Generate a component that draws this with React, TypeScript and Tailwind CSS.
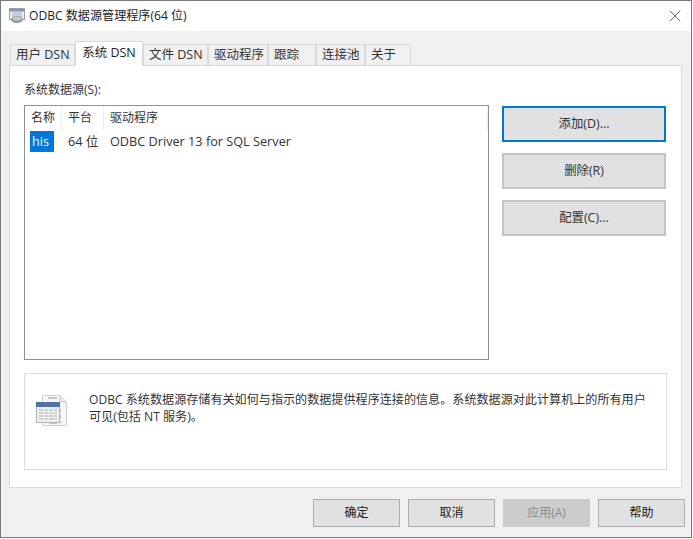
import React from 'react';
import { X } from 'lucide-react';

const tabs = [
  { label: '用户 DSN', width: 'w-[65px]' },
  { label: '系统 DSN', width: 'w-[68px]', active: true },
  { label: '文件 DSN', width: 'w-[65px]' },
  { label: '驱动程序', width: 'w-[60px]' },
  { label: '跟踪', width: 'w-[48px]' },
  { label: '连接池', width: 'w-[49px]' },
  { label: '关于', width: 'w-[46px]' },
];

const TitleIcon = () => (
  <svg width="16" height="16" viewBox="0 0 16 16" className="shrink-0">
    <rect x="0.5" y="0.5" width="15" height="11" fill="#e8ecf2" stroke="#9a9fa8" />
    <rect x="1" y="1" width="14" height="2.5" fill="#7f95b8" />
    <path d="M3 5h10M3 7h10M3 9h10" stroke="#a8adb5" />
    <ellipse cx="8" cy="11.5" rx="6" ry="3.5" fill="#8f959b" />
    <ellipse cx="8" cy="10.5" rx="4.5" ry="2" fill="#c4c8cc" />
  </svg>
);

const TableIcon = () => (
  <svg width="32" height="34" viewBox="0 0 32 34" className="shrink-0">
    <path d="M6.5 1.5H24L30.5 8V31.5H6.5Z" fill="#f6f6f6" stroke="#d0d0d0" />
    <path d="M24 1.5V8H30.5" fill="#e6e6e6" stroke="#c8c8c8" />
    <path d="M12 4h9M24 15v3M24 21v3M24 27v2M13 29h8" stroke="#b5b5b5" strokeWidth="1.5" />
    <rect x="0.5" y="8.5" width="23" height="20" fill="#f0f0f0" stroke="#b4b4b4" />
    <rect x="0" y="8" width="24" height="5" fill="#4e71a8" />
    <path d="M3 16h18M3 19h18M3 22h18M3 25h18" stroke="#b0b0b0" />
    <path d="M8 14v13M13 14v13M18 14v13" stroke="#f0f0f0" strokeWidth="1.2" />
  </svg>
);

const PanelButton = ({ label, focused }: { label: string; focused?: boolean }) => (
  <button
    className={`w-[164px] h-[36px] flex items-center justify-center bg-[#e1e1e1] text-[12.4px] text-[#333] border-2 ${
      focused ? 'border-[#0078d7]' : 'border-[#c4c4c4]'
    }`}
  >
    {label}
  </button>
);

const FooterButton = ({ label, disabled }: { label: string; disabled?: boolean }) => (
  <button
    className={`w-[87px] h-[28px] flex items-center justify-center border ${
      disabled ? 'bg-[#cccccc] border-[#cccccc] text-[#8a8a8a]' : 'bg-[#e1e1e1] border-[#adadad] text-[#222]'
    }`}
  >
    {label}
  </button>
);

export default function App() {
  return (
    <div
      className="w-[692px] h-[538px] flex flex-col border border-[#7a7a7a] bg-[#f0f0f0] text-[12px] leading-[16px] text-[#333]"
      style={{ fontFamily: '"Open Sans", "Noto Sans CJK SC", sans-serif' }}
    >
      {/* Title bar */}
      <div className="h-[30px] shrink-0 bg-white flex items-center pl-[8px] pr-[6px]">
        <TitleIcon />
        <span className="ml-[4px] text-[12.1px] text-[#222]">ODBC 数据源管理程序(64 位)</span>
        <div className="flex-1" />
        <X className="w-[20px] h-[20px] text-[#333]" strokeWidth={0.9} />
      </div>

      <div className="flex-1 flex flex-col pt-[10px] pl-[8px] pr-[8px]">
        {/* Tabs */}
        <div className="flex h-[24px] pl-[1px] relative z-10 text-[12.5px]">
          {tabs.map((t) =>
            t.active ? (
              <div
                key={t.label}
                className={`${t.width} h-[25px] bg-white border border-b-0 border-[#d9d9d9] flex items-center justify-center pb-[2px] text-[#222] whitespace-nowrap`}
              >
                {t.label}
              </div>
            ) : (
              <div
                key={t.label}
                className={`${t.width} h-[21px] mt-[3px] bg-[#f0f0f0] border border-b-0 border-[#d9d9d9] flex items-center pl-[5px] whitespace-nowrap`}
              >
                {t.label}
              </div>
            )
          )}
        </div>

        {/* Panel */}
        <div className="w-[673px] h-[423px] bg-white border border-[#d9d9d9] pl-[14px] pr-[15px] flex flex-col">
          <div className="mt-[16px] h-[16px] text-[#333]">系统数据源(S):</div>
          <div className="mt-[8px] flex gap-[13px]">
            {/* List */}
            <div className="w-[465px] h-[255px] border border-[#8f8f9d] -mt-px">
              <div className="flex h-[24px]">
                <div className="w-[37px] pl-[6px] flex items-center border-r border-[#ececec]">名称</div>
                <div className="w-[42px] pl-[6px] flex items-center border-r border-[#ececec]">平台</div>
                <div className="flex-1 pl-[6px] flex items-center border-r border-[#ececec]">驱动程序</div>
              </div>
              <div className="flex items-center h-[20px] mt-[1px]">
                <div className="w-[37px] pl-[5px]">
                  <span className="inline-block w-[24px] h-[21px] leading-[21px] pl-[2px] bg-[#0078d7] text-white text-[12.6px]">his</span>
                </div>
                <div className="w-[42px] pl-[6px] text-[12.7px] whitespace-nowrap">64 位</div>
                <div className="pl-[6px] text-[12.7px] whitespace-nowrap">ODBC Driver 13 for SQL Server</div>
              </div>
            </div>
            {/* Side buttons */}
            <div className="flex flex-col gap-[11px]">
              <PanelButton label="添加(D)..." focused />
              <PanelButton label="删除(R)" />
              <PanelButton label="配置(C)..." />
            </div>
          </div>

          {/* Info box */}
          <div className="mt-[13px] w-[643px] h-[97px] border border-[#dcdcdc] flex pl-[11px] pr-[16px] pt-[19px]">
            <div className="mt-[1px]">
              <TableIcon />
            </div>
            <p className="ml-[21px] w-[566px] leading-[17px] -mt-[2px] text-[12.1px]">
              ODBC 系统数据源存储有关如何与指示的数据提供程序连接的信息。系统数据源对此计算机上的所有用户可见(包括 NT 服务)。
            </p>
          </div>
        </div>

        {/* Footer */}
        <div className="mt-[11px] -mr-[2px] flex justify-end gap-[8px]">
          <FooterButton label="确定" />
          <FooterButton label="取消" />
          <FooterButton label="应用(A)" disabled />
          <FooterButton label="帮助" />
        </div>
      </div>
    </div>
  );
}
